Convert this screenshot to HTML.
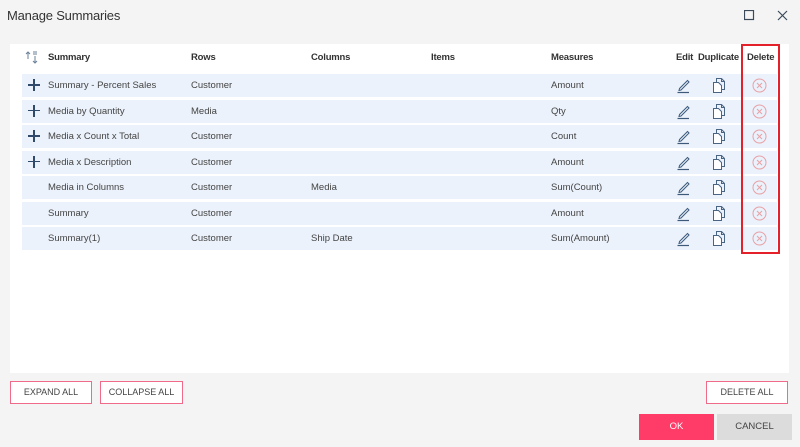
<!DOCTYPE html>
<html><head><meta charset="utf-8"><style>
*{margin:0;padding:0;box-sizing:border-box}
body{width:800px;height:447px;background:#f4f4f4;font-family:"Liberation Sans",sans-serif;position:relative;overflow:hidden;color:#333}
.title{position:absolute;left:7px;top:8px;font-size:13px;color:#333;letter-spacing:-0.2px}
.panel{position:absolute;left:10px;top:44px;width:779px;height:329px;background:#fff}
.hdr{position:absolute;top:52px;font-size:9.5px;font-weight:bold;color:#333;letter-spacing:-0.2px}
.row{position:absolute;left:22px;width:755px;height:23px;background:#ebf2fb}
.c{position:absolute;font-size:9.5px;color:#444;line-height:23px;top:0}
.plus{position:absolute;left:6px;top:5px;width:12px;height:12px}
.plus:before{content:"";position:absolute;left:5.25px;top:0;width:1.5px;height:12px;background:#2f4a6a}
.plus:after{content:"";position:absolute;left:0;top:5.25px;width:12px;height:1.5px;background:#2f4a6a}
.btn{position:absolute;border:1px solid #f06a8a;background:#fff;font-size:9px;color:#444;text-align:center;line-height:21px}
.redbox{position:absolute;left:741px;top:44px;width:39px;height:210px;border:2px solid #e4202a}
svg{position:absolute}
.ed{left:654px;top:3px}.du{left:689px;top:3px}.de{left:730px;top:4px}
</style></head><body>
<div class="title">Manage Summaries</div>
<svg style="left:744px;top:10px" width="11" height="11"><rect x="0.5" y="0.5" width="9" height="9" fill="none" stroke="#3a4a5a" stroke-width="1.2"/></svg>
<svg style="left:777px;top:10px" width="11" height="11"><path d="M1 1L10 10M10 1L1 10" stroke="#3a4a5a" stroke-width="1.2"/></svg>
<div class="panel"></div>
<svg style="left:25px;top:50px" width="14" height="14"><path d="M3 2V9M1 4L3 2L5 4M10 6V13M8 11L10 13L12 11M8 2H12M8 4H12" stroke="#6a7f98" stroke-width="1" fill="none"/></svg>
<div class="hdr" style="left:48px">Summary</div>
<div class="hdr" style="left:191px">Rows</div>
<div class="hdr" style="left:311px">Columns</div>
<div class="hdr" style="left:431px">Items</div>
<div class="hdr" style="left:551px">Measures</div>
<div class="hdr" style="left:676px">Edit</div>
<div class="hdr" style="left:698px">Duplicate</div>
<div class="hdr" style="left:747px">Delete</div>

<svg width="0" height="0" style="position:absolute">
<defs>
<g id="ed"><path d="M3.5 11.5L11.5 3.5L13 5L5 13L3 13.5Z" fill="none" stroke="#3d5a7c" stroke-width="1"/><path d="M1.5 15.5H13" stroke="#3d5a7c" stroke-width="1.2"/></g>
<g id="du"><path d="M2.5 5.5H7.5L10.5 8.5V15.5H2.5Z" fill="#fff" stroke="#4a6584" stroke-width="1"/><path d="M5.5 5.5V1.5H10.5L13.5 4.5V12.5H10.5" fill="none" stroke="#4a6584" stroke-width="1"/><path d="M10.5 1.5V4.5H13.5" fill="none" stroke="#4a6584" stroke-width="1"/></g>
<g id="de"><circle cx="7.5" cy="7.5" r="6.5" fill="none" stroke="#e9a0a6" stroke-width="1"/><path d="M5 5L10 10M10 5L5 10" stroke="#e9a0a6" stroke-width="1"/></g>
</defs></svg>

<div class="row" style="top:74px"><div class="plus"></div><div class="c" style="left:26px">Summary - Percent Sales</div><div class="c" style="left:169px">Customer</div><div class="c" style="left:529px">Amount</div><svg class="ed" width="15" height="17"><use href="#ed"/></svg><svg class="du" width="15" height="17"><use href="#du"/></svg><svg class="de" width="15" height="15"><use href="#de"/></svg></div>
<div class="row" style="top:99.5px"><div class="plus"></div><div class="c" style="left:26px">Media by Quantity</div><div class="c" style="left:169px">Media</div><div class="c" style="left:529px">Qty</div><svg class="ed" width="15" height="17"><use href="#ed"/></svg><svg class="du" width="15" height="17"><use href="#du"/></svg><svg class="de" width="15" height="15"><use href="#de"/></svg></div>
<div class="row" style="top:125px"><div class="plus"></div><div class="c" style="left:26px">Media x Count x Total</div><div class="c" style="left:169px">Customer</div><div class="c" style="left:529px">Count</div><svg class="ed" width="15" height="17"><use href="#ed"/></svg><svg class="du" width="15" height="17"><use href="#du"/></svg><svg class="de" width="15" height="15"><use href="#de"/></svg></div>
<div class="row" style="top:150.5px"><div class="plus"></div><div class="c" style="left:26px">Media x Description</div><div class="c" style="left:169px">Customer</div><div class="c" style="left:529px">Amount</div><svg class="ed" width="15" height="17"><use href="#ed"/></svg><svg class="du" width="15" height="17"><use href="#du"/></svg><svg class="de" width="15" height="15"><use href="#de"/></svg></div>
<div class="row" style="top:176px"><div class="c" style="left:26px">Media in Columns</div><div class="c" style="left:169px">Customer</div><div class="c" style="left:289px">Media</div><div class="c" style="left:529px">Sum(Count)</div><svg class="ed" width="15" height="17"><use href="#ed"/></svg><svg class="du" width="15" height="17"><use href="#du"/></svg><svg class="de" width="15" height="15"><use href="#de"/></svg></div>
<div class="row" style="top:201.5px"><div class="c" style="left:26px">Summary</div><div class="c" style="left:169px">Customer</div><div class="c" style="left:529px">Amount</div><svg class="ed" width="15" height="17"><use href="#ed"/></svg><svg class="du" width="15" height="17"><use href="#du"/></svg><svg class="de" width="15" height="15"><use href="#de"/></svg></div>
<div class="row" style="top:227px"><div class="c" style="left:26px">Summary(1)</div><div class="c" style="left:169px">Customer</div><div class="c" style="left:289px">Ship Date</div><div class="c" style="left:529px">Sum(Amount)</div><svg class="ed" width="15" height="17"><use href="#ed"/></svg><svg class="du" width="15" height="17"><use href="#du"/></svg><svg class="de" width="15" height="15"><use href="#de"/></svg></div>

<div class="redbox"></div>

<div class="btn" style="left:10px;top:381px;width:82px;height:23px">EXPAND ALL</div>
<div class="btn" style="left:100px;top:381px;width:83px;height:23px">COLLAPSE ALL</div>
<div class="btn" style="left:706px;top:381px;width:82px;height:23px">DELETE ALL</div>
<div style="position:absolute;left:639px;top:414px;width:75px;height:26px;background:#ff3b68;color:#fff;font-size:9.5px;text-align:center;line-height:26px">OK</div>
<div style="position:absolute;left:717px;top:414px;width:75px;height:26px;background:#dcdcdc;color:#444;font-size:9.5px;text-align:center;line-height:26px">CANCEL</div>
</body></html>
